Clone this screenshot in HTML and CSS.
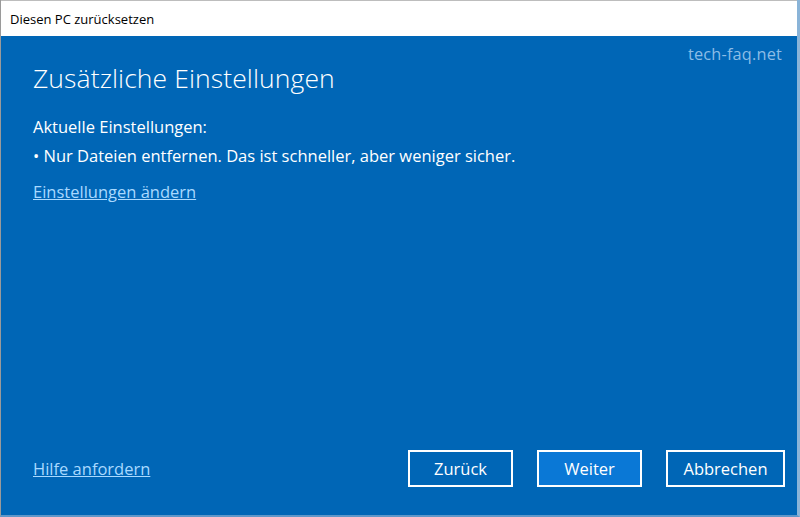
FILE: index.html
```html
<!DOCTYPE html>
<html>
  <head>
    <meta name="viewport" content="width=device-width,initial-scale=1.0" />
    <title>Diesen PC zurücksetzen</title>
    <link rel="stylesheet" href="styles.css">
  </head>
  <body>
    <div class="window">
      <div class="titlebar">Diesen PC zurücksetzen</div>
      <div class="content">
        <span class="watermark">tech-faq.net</span>
        <div class="main">
          <h1 class="heading">Zusätzliche Einstellungen</h1>
          <p class="label">Aktuelle Einstellungen:</p>
          <p class="bullet">• Nur Dateien entfernen. Das ist schneller, aber weniger sicher.</p>
          <a class="link change" href="#">Einstellungen ändern</a>
        </div>
        <div class="footer">
          <a class="link" href="#">Hilfe anfordern</a>
          <div class="buttons">
            <button class="btn">Zurück</button>
            <button class="btn primary">Weiter</button>
            <button class="btn wide">Abbrechen</button>
          </div>
        </div>
      </div>
    </div>
  </body>
</html>
```

FILE: styles.css
```css
body {
  margin: 0;
  font-family: "Open Sans", "Noto Sans", sans-serif;
}

.window {
  width: 800px;
  height: 517px;
  box-sizing: border-box;
  display: flex;
  flex-direction: column;
  border-left: 1px solid #9a9a9a;
  border-right: 3px solid #8ab4d8;
  border-bottom: 2px solid #5f97c9;
  background: #0066b6;
}

.titlebar {
  height: 36px;
  flex-shrink: 0;
  box-sizing: border-box;
  background: #fff;
  color: #000;
  font-size: 13px;
  padding: 9px 0 0 9px;
  border-top: 1px solid #bdbdbd;
}

.content {
  flex: 1;
  position: relative;
  display: flex;
  flex-direction: column;
  justify-content: space-between;
  color: #fff;
  padding: 0 12px 0 32px;
}

.watermark {
  position: absolute;
  top: 7px;
  right: 15px;
  color: #8dbde6;
  font-size: 16.3px;
  letter-spacing: 0.2px;
}

.heading {
  margin: 24px 0 0;
  font-size: 26.5px;
  line-height: 36px;
  font-weight: 300;
  letter-spacing: 0.1px;
}

.label {
  margin: 20px 0 0;
  font-size: 16.5px;
  line-height: 22px;
}

.bullet {
  margin: 7px 0 0;
  font-size: 16.5px;
  line-height: 22px;
}

.link {
  color: #a9d9ff;
  font-size: 16.5px;
  line-height: 22px;
}

.change {
  display: inline-block;
  margin-top: 14px;
}

.footer {
  display: flex;
  align-items: center;
  justify-content: space-between;
  padding-bottom: 28px;
}

.buttons {
  display: flex;
  gap: 24px;
}

.btn {
  width: 105px;
  height: 37px;
  box-sizing: border-box;
  border: 2px solid #fff;
  background: #0066b6;
  color: #fff;
  font-family: inherit;
  font-size: 16.5px;
  padding: 0;
}

.btn.primary {
  background: #0a78d6;
}

.btn.wide {
  width: 119px;
}
```
